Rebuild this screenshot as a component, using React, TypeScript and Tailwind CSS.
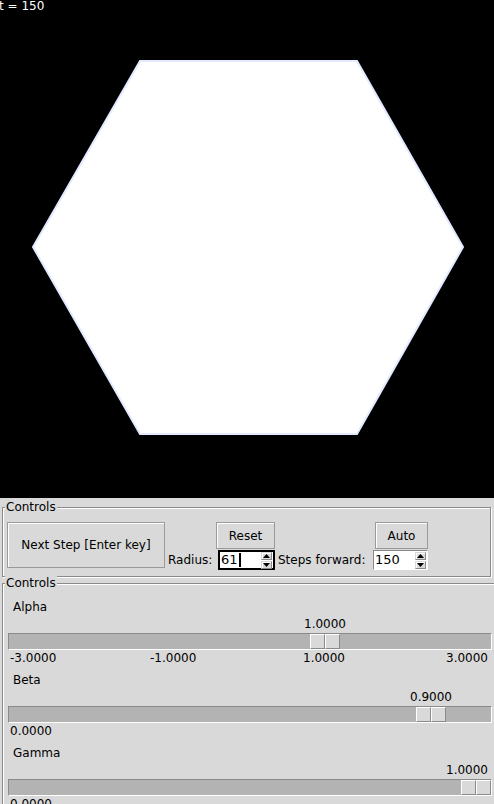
import React from "react";

const FONT = "font-['DejaVu_Sans',sans-serif]";

const Arrow = ({ up }: { up?: boolean }) => (
  <div className="flex h-[8px] w-[11px] items-center justify-center border border-[#d9d9d9] border-b-[#8a8a8a] border-r-[#8a8a8a] bg-[#d9d9d9] shadow-[inset_1px_1px_0_#fff]">
    <svg width="7" height="4" viewBox="0 0 7 4">
      {up ? <polygon points="0,4 7,4 3.5,0" fill="#000" /> : <polygon points="0,0 7,0 3.5,4" fill="#000" />}
    </svg>
  </div>
);

const Spin = ({ value, focused }: { value: string; focused?: boolean }) => (
  <div
    className={
      focused
        ? "flex h-[20px] w-[57px] items-center border-2 border-black bg-white"
        : "flex h-[20px] w-[55px] items-center border border-[#8a8a8a] border-b-white border-r-white bg-white"
    }
  >
    <div className="flex flex-1 items-center pl-[1px] text-[13px] leading-[16px] text-black">
      {value}
      {focused && <span className="ml-px h-[14px] w-[2px] bg-black" />}
    </div>
    <div className="mr-px flex flex-col gap-px">
      <Arrow up />
      <Arrow />
    </div>
  </div>
);

const Button = ({ label, className }: { label: string; className: string }) => (
  <button
    className={
      "flex items-center justify-center border border-[#9a9a9a] bg-[#d9d9d9] text-black shadow-[inset_1px_1px_0_#fff] " +
      className
    }
  >
    {label}
  </button>
);

const Frame = ({ children, className }: { children: React.ReactNode; className: string }) => (
  <div
    className={
      "relative ml-[2px] border border-[#8a8a8a] shadow-[inset_1px_1px_0_#fff,1px_1px_0_#fff] " + className
    }
  >
    <span className="absolute -top-[9px] left-[2px] bg-[#d9d9d9] px-px leading-[16px] text-black">Controls</span>
    {children}
  </div>
);

type SliderProps = {
  label: string;
  value: number;
  min: number;
  max: number;
  ticks: [string, number][];
};

const Slider = ({ label, value, min, max, ticks }: SliderProps) => {
  const travel = 452;
  const handleLeft = Math.round(((value - min) / (max - min)) * travel);
  const center = Math.min(handleLeft + 16, 459);
  return (
    <div className="flex w-[484px] flex-col">
      <div className="h-[17px] pl-[5px] leading-[17px] text-black">{label}</div>
      <div className="relative h-[17px]">
        <span className="absolute top-0 -translate-x-1/2 leading-[16px] text-black" style={{ left: center }}>
          {value.toFixed(4)}
        </span>
      </div>
      <div className="relative h-[17px] border border-[#8a8a8a] border-b-white border-r-white bg-[#b3b3b3]">
        <div className="absolute top-0 flex h-[15px] w-[30px]" style={{ left: handleLeft }}>
          <div className="h-full w-[15px] border border-white border-b-[#8a8a8a] border-r-[#8a8a8a] bg-[#d9d9d9]" />
          <div className="h-full w-[15px] border border-white border-b-[#8a8a8a] border-r-[#8a8a8a] bg-[#d9d9d9]" />
        </div>
      </div>
      <div className="relative h-[22px]">
        {ticks.map(([t, x]) => (
          <span key={t} className="absolute top-0 leading-[16px] text-black" style={{ left: x }}>
            {t}
          </span>
        ))}
      </div>
    </div>
  );
};

export default function App() {
  return (
    <div className={`h-[804px] w-[494px] overflow-hidden bg-[#d9d9d9] text-[12px] ${FONT}`}>
      <div className="relative h-[498px] bg-black">
        <span className="absolute -left-[1px] -top-[1px] text-[12px] leading-[14px] text-white">t = 150</span>
        <svg width="494" height="498" viewBox="0 0 494 498">
          <polygon
            points="140,61 357,61 463,247 357,434 140,434 33,247"
            fill="#fff"
            stroke="#e3e9ff"
            strokeWidth="2"
          />
        </svg>
      </div>

      <Frame className="mt-[9px] h-[70px] w-[489px] pl-[4px] pt-[14px]">
        <div className="flex">
          <Button label="Next Step [Enter key]" className="h-[46px] w-[158px]" />
          <div className="flex items-end pb-[1px] pl-[3px]">
            <span className="w-[48px] leading-[18px] text-black">Radius:</span>
          </div>
          <div className="flex w-[59px] flex-col gap-px">
            <Button label="Reset" className="h-[27px] w-[59px]" />
            <div className="ml-[2px]">
              <Spin value="61" focused />
            </div>
          </div>
          <div className="flex items-end pb-[1px] pl-[3px]">
            <span className="w-[95px] leading-[18px] text-black">Steps forward:</span>
          </div>
          <div className="flex flex-col gap-px">
            <Button label="Auto" className="ml-[2px] h-[27px] w-[53px]" />
            <Spin value="150" />
          </div>
        </div>
      </Frame>

      <Frame className="mt-[6px] h-[300px] w-[520px] pl-[5px] pt-[15px]">
        <Slider
          label="Alpha"
          value={1}
          min={-3}
          max={3}
          ticks={[
            ["-3.0000", 2],
            ["-1.0000", 142],
            ["1.0000", 295],
            ["3.0000", 438],
          ]}
        />
        <Slider label="Beta" value={0.9} min={0} max={1} ticks={[["0.0000", 2]]} />
        <Slider label="Gamma" value={1} min={0} max={1} ticks={[["0.0000", 2]]} />
      </Frame>
    </div>
  );
}
